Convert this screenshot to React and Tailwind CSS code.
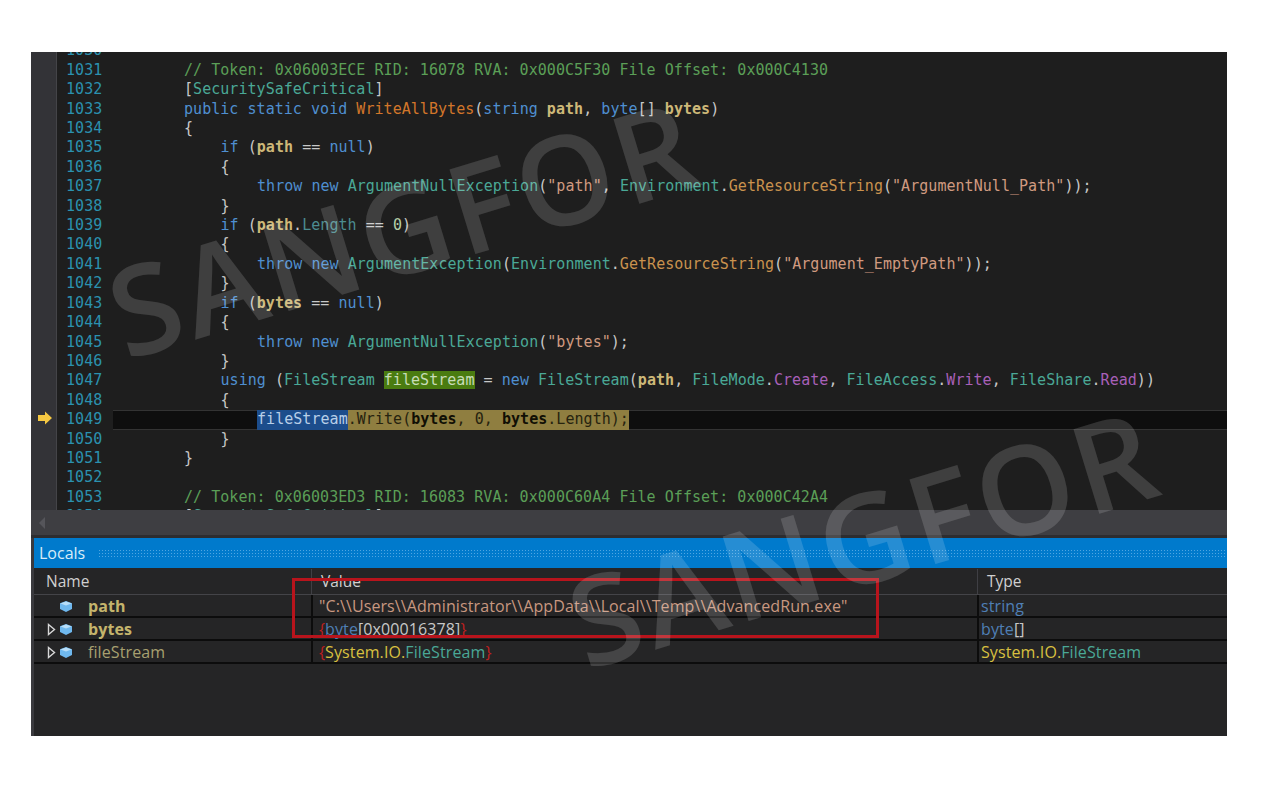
import React from 'react';

const tone = {
  p: 'text-[#c8c8c8]',
  c: 'text-[#5b9f57]',
  k: 'text-[#4f8fd0]',
  t: 'text-[#4aa896]',
  m: 'text-[#d2762a]',
  g: 'text-[#c9924e]',
  v: 'font-bold text-[#cdb878]',
  l: 'text-[#4c8c90]',
  s: 'text-[#d09a80]',
  e: 'text-[#a860b8]',
  n: 'text-[#b5cea8]',
};

const code = [
  [1030, 0, []],
  [1031, 8, [['// Token: 0x06003ECE RID: 16078 RVA: 0x000C5F30 File Offset: 0x000C4130', 'c']]],
  [1032, 8, [['[', 'p'], ['SecuritySafeCritical', 't'], [']', 'p']]],
  [1033, 8, [['public static void ', 'k'], ['WriteAllBytes', 'm'], ['(', 'p'], ['string ', 'k'], ['path', 'v'], [', ', 'p'], ['byte', 'k'], ['[] ', 'p'], ['bytes', 'v'], [')', 'p']]],
  [1034, 8, [['{', 'p']]],
  [1035, 12, [['if ', 'k'], ['(', 'p'], ['path', 'v'], [' == ', 'p'], ['null', 'k'], [')', 'p']]],
  [1036, 12, [['{', 'p']]],
  [1037, 16, [['throw new ', 'k'], ['ArgumentNullException', 't'], ['(', 'p'], ['"path"', 's'], [', ', 'p'], ['Environment', 't'], ['.', 'p'], ['GetResourceString', 'g'], ['(', 'p'], ['"ArgumentNull_Path"', 's'], ['));', 'p']]],
  [1038, 12, [['}', 'p']]],
  [1039, 12, [['if ', 'k'], ['(', 'p'], ['path', 'v'], ['.', 'p'], ['Length', 'l'], [' == ', 'p'], ['0', 'n'], [')', 'p']]],
  [1040, 12, [['{', 'p']]],
  [1041, 16, [['throw new ', 'k'], ['ArgumentException', 't'], ['(', 'p'], ['Environment', 't'], ['.', 'p'], ['GetResourceString', 'g'], ['(', 'p'], ['"Argument_EmptyPath"', 's'], ['));', 'p']]],
  [1042, 12, [['}', 'p']]],
  [1043, 12, [['if ', 'k'], ['(', 'p'], ['bytes', 'v'], [' == ', 'p'], ['null', 'k'], [')', 'p']]],
  [1044, 12, [['{', 'p']]],
  [1045, 16, [['throw new ', 'k'], ['ArgumentNullException', 't'], ['(', 'p'], ['"bytes"', 's'], [');', 'p']]],
  [1046, 12, [['}', 'p']]],
  [1047, 12, [['using ', 'k'], ['(', 'p'], ['FileStream ', 't'], ['fileStream', 'h'], [' = ', 'p'], ['new ', 'k'], ['FileStream', 't'], ['(', 'p'], ['path', 'v'], [', ', 'p'], ['FileMode', 't'], ['.', 'p'], ['Create', 'e'], [', ', 'p'], ['FileAccess', 't'], ['.', 'p'], ['Write', 'e'], [', ', 'p'], ['FileShare', 't'], ['.', 'p'], ['Read', 'e'], ['))', 'p']]],
  [1048, 12, [['{', 'p']]],
  [1049, 16, 'current'],
  [1050, 12, [['}', 'p']]],
  [1051, 8, [['}', 'p']]],
  [1052, 0, []],
  [1053, 8, [['// Token: 0x06003ED3 RID: 16083 RVA: 0x000C60A4 File Offset: 0x000C42A4', 'c']]],
  [1054, 8, [['[', 'p'], ['SecuritySafeCritical', 't'], [']', 'p']]],
];

const indentClass = { 0: 'pl-0', 8: 'pl-[73px]', 12: 'pl-[109.5px]', 16: 'pl-[146px]' };

const CurrentLine = () => (
  <div className="ml-[2px] flex h-full items-center bg-[#0e0e0e] border-y border-[#333333] pl-[144px]">
    <span className="bg-[#1c4d8c] text-[#b8cfe8]">fileStream</span>
    <span className="bg-[#8f7e40] text-[#26230f]">
      .Write(<b className="text-[#100e04]">bytes</b>, 0, <b className="text-[#100e04]">bytes</b>.Length);
    </span>
  </div>
);

const Cube = () => (
  <svg width="14" height="13" viewBox="0 0 14 13" className="shrink-0">
    <path d="M7 1 L13 3.2 V9 L7 12 L1 9 V3.2 Z" fill="#6fb8ee" />
    <path d="M1.5 3.4 L7 5.6 L12.5 3.4 L7 1.4 Z" fill="#b9def8" />
  </svg>
);

const Expander = () => (
  <svg width="9" height="13" viewBox="0 0 9 13" className="shrink-0">
    <path d="M1.5 1.5 L7.5 6.5 L1.5 11.5 Z" fill="none" stroke="#d8d8d8" strokeWidth="1.4" />
  </svg>
);

const Row = ({ expand, name, bold, value, type }) => (
  <div className="grid h-[23px] grid-cols-[277px_666px_1fr] border-b-2 border-[#0c0c0c] text-[16px] leading-[22px] tracking-[0.1px]">
    <div className="flex items-center pl-[13px]">
      <span className="w-[12px]">{expand && <Expander />}</span>
      <Cube />
      <span className={bold ? 'ml-[15px] font-bold text-[#c4b46c]' : 'ml-[15px] text-[#a8a070]'}>{name}</span>
    </div>
    <div className="border-l-2 border-[#0c0c0c] pl-[6px]">{value}</div>
    <div className="border-l-2 border-[#0c0c0c] pl-[2px]">{type}</div>
  </div>
);

const Watermark = ({ className }) => (
  <div className={`absolute -rotate-[17deg] font-['Open_Sans',sans-serif] text-[124px] font-semibold leading-none tracking-[4px] text-white/15 select-none ${className}`}>
    SANGFOR
  </div>
);

export default function App() {
  return (
    <div className="h-[793px] bg-white pt-[52px] pl-[31px]">
      <div className="relative flex h-[684px] w-[1196px] flex-col overflow-hidden bg-[#252526]">
        {/* code pane */}
        <div className="flex h-[458px] overflow-hidden bg-[#1e1e1e] font-['DejaVu_Sans_Mono',monospace] text-[15px] leading-[19.41px] tracking-[0.04px]">
          <div className="w-[26px] shrink-0 bg-[#333337] border-r border-[#444448]">
            <div className="h-[359px]" />
            <svg width="16" height="14" viewBox="0 0 16 14" className="ml-[6px]">
              <path d="M1 4 H8 V0.5 L15 7 L8 13.5 V10 H1 Z" fill="#f5c842" />
            </svg>
          </div>
          <div className="-mt-[10.6px] min-w-0 flex-1">
            {code.map(([num, indent, tokens]) => (
              <div key={num} className="flex h-[19.41px] whitespace-pre">
                <span className="w-[54px] shrink-0 pl-[9px] text-[#2b91af]">{num}</span>
                {tokens === 'current' ? (
                  <div className="flex-1"><CurrentLine /></div>
                ) : (
                  <div className={indentClass[indent]}>
                    {tokens.map(([text, kind], i) =>
                      kind === 'h' ? (
                        <span key={i} className="bg-[#4a7c10] text-[#c8dcb8]">{text}</span>
                      ) : (
                        <span key={i} className={tone[kind]}>{text}</span>
                      )
                    )}
                  </div>
                )}
              </div>
            ))}
          </div>
        </div>

        {/* horizontal scrollbar */}
        <div className="flex h-[25px] items-center bg-[#3e3e42] pl-[8px]">
          <svg width="6" height="12" viewBox="0 0 6 12">
            <path d="M6 0 V12 L0 6 Z" fill="#55555a" />
          </svg>
        </div>
        <div className="h-[3px] bg-[#2d2d30]" />

        {/* locals */}
        <div className="flex min-h-0 flex-1 flex-col border-l-[3px] border-[#3a3a3e] font-['Open_Sans',sans-serif]">
          <div className="flex h-[30px] items-center bg-[#007acc] pl-[5px] text-[16px] text-[#d8ecf8]">
            <span>Locals</span>
            <div className="ml-[13px] h-[8px] flex-1 bg-[radial-gradient(#4fa6e2_1px,transparent_1px)] bg-[length:3px_3px]" />
          </div>
          <div className="grid h-[27px] grid-cols-[277px_666px_1fr] border-b border-[#444448] pt-[1px] text-[15.5px] leading-[24px] text-[#d0d0d0]">
            <div className="pl-[12px]">Name</div>
            <div className="border-l border-[#3f3f44] pl-[9px]">Value</div>
            <div className="border-l border-[#3f3f44] pl-[9px]">Type</div>
          </div>
          <Row
            bold
            name="path"
            value={<span className="text-[#c99880]">"C:\\Users\\Administrator\\AppData\\Local\\Temp\\AdvancedRun.exe"</span>}
            type={<span className="text-[#4f7fb5]">string</span>}
          />
          <Row
            expand
            bold
            name="bytes"
            value={
              <span className="text-[#c8c8c8]">
                <span className="text-[#c02020]">{'{'}</span>
                <span className="text-[#4f7fb5]">byte</span>[0x00016378]
                <span className="text-[#c02020]">{'}'}</span>
              </span>
            }
            type={<span className="text-[#c8c8c8]"><span className="text-[#4f7fb5]">byte</span>[]</span>}
          />
          <Row
            expand
            name="fileStream"
            value={
              <span>
                <span className="text-[#c02020]">{'{'}</span>
                <span className="text-[#d8c040]">System.IO.</span>
                <span className="text-[#4aa896]">FileStream</span>
                <span className="text-[#c02020]">{'}'}</span>
              </span>
            }
            type={
              <span>
                <span className="text-[#d8c040]">System.IO.</span>
                <span className="text-[#4aa896]">FileStream</span>
              </span>
            }
          />
        </div>

        {/* red annotation box */}
        <div className="absolute left-[261px] top-[526px] h-[60px] w-[587px] border-[3px] border-[#b8141c]" />

        <Watermark className="left-[68px] top-[112px]" />
        <Watermark className="left-[528px] top-[422px]" />
      </div>
    </div>
  );
}
